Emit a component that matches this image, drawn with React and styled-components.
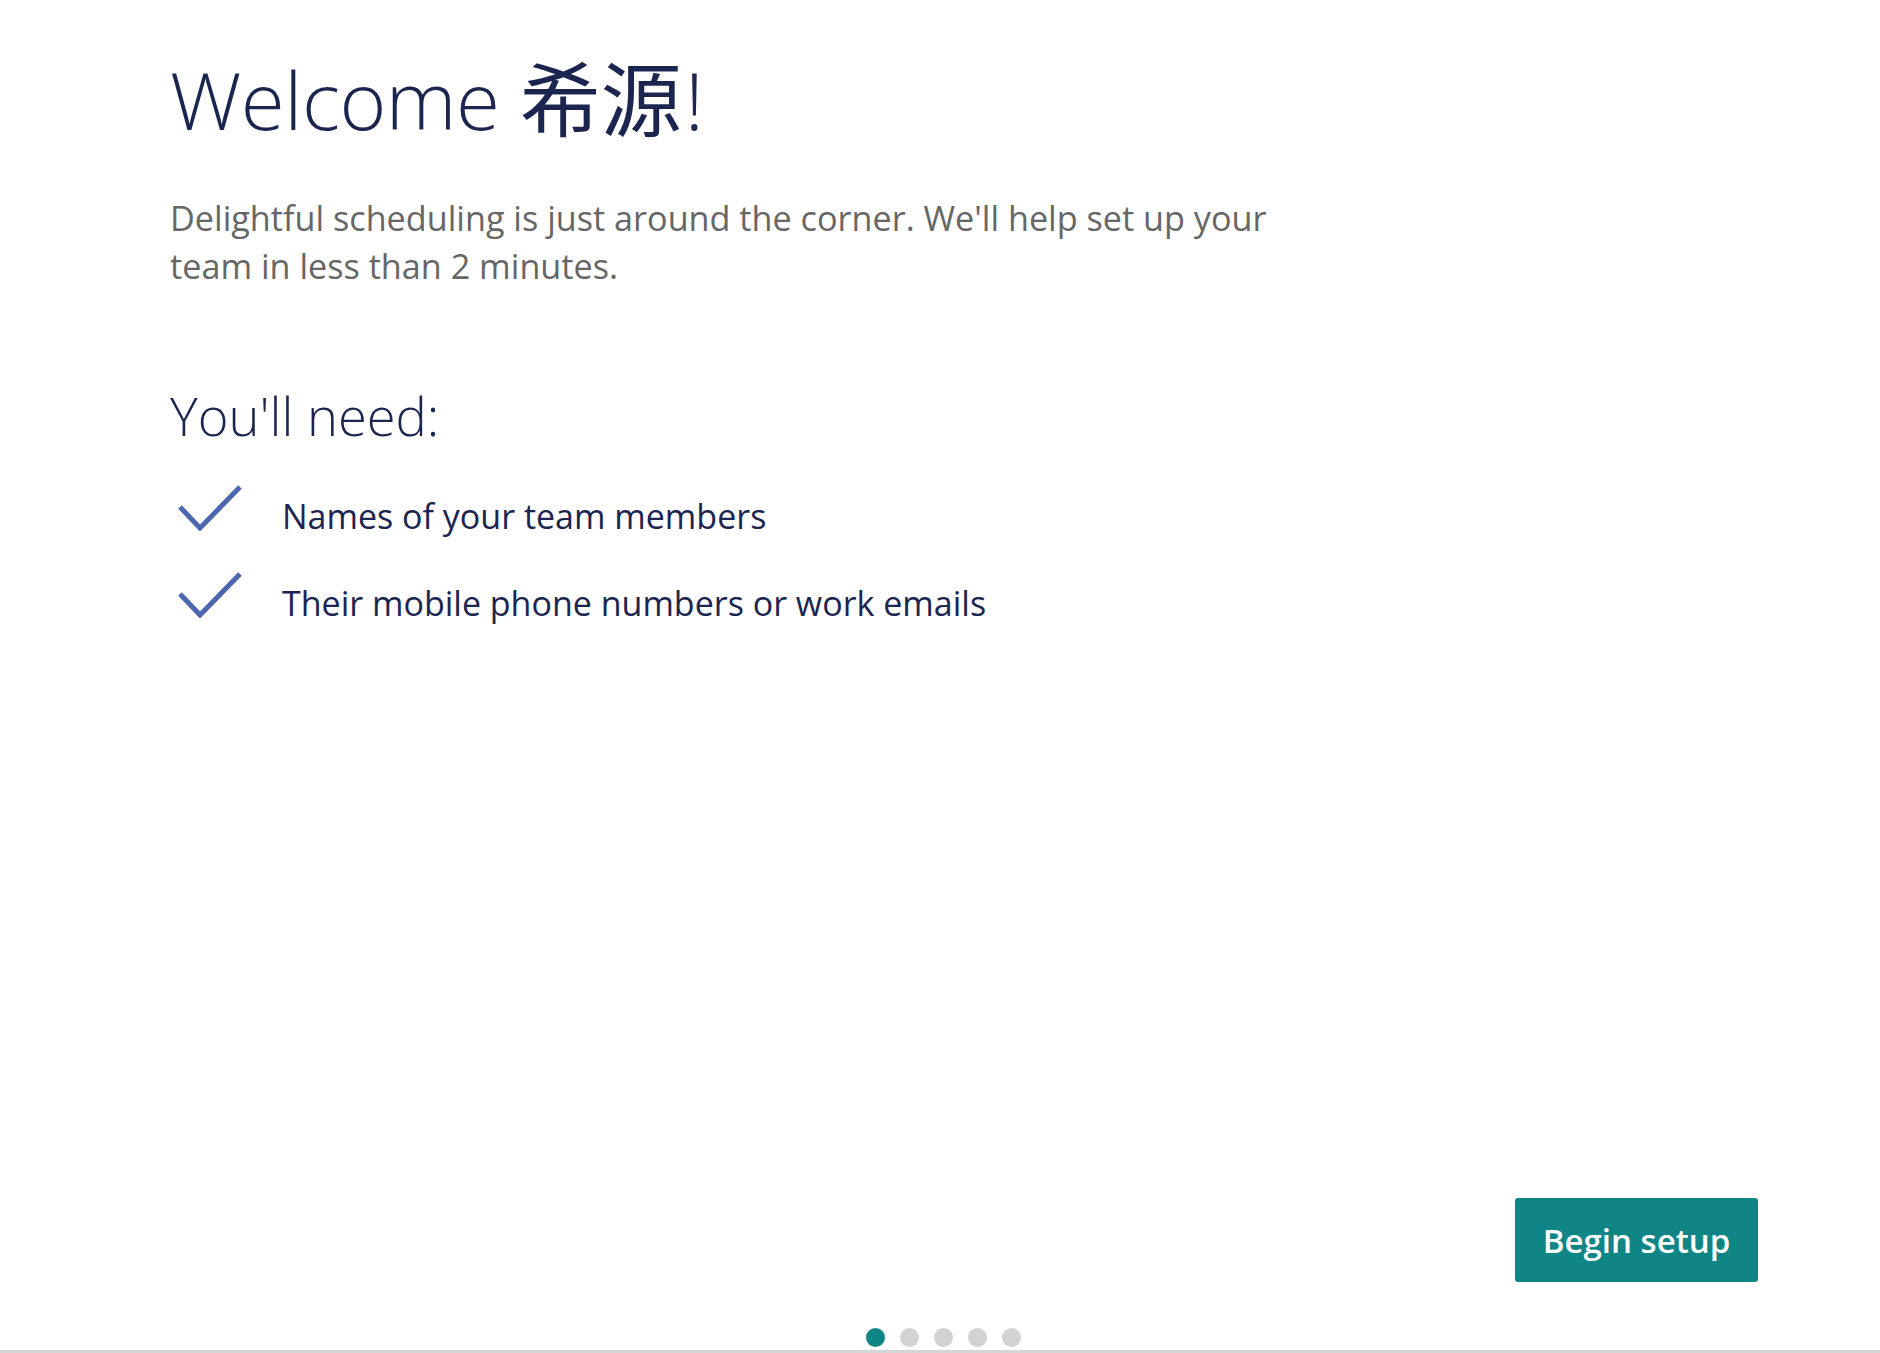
import React from "react";
import styled, { createGlobalStyle } from "styled-components";

const Global = createGlobalStyle`
  html, body { margin: 0; padding: 0; background: #ffffff; }
  body { font-family: "Open Sans", "Noto Sans", sans-serif; }
  * { box-sizing: border-box; }
`;

const Page = styled.div`
  height: 1353px;
  display: flex;
  flex-direction: column;
  border-bottom: 3px solid #d5d5d5;
`;

const Content = styled.main`
  flex: 1;
  padding: 0 0 0 170px;
`;

const Title = styled.h1`
  margin: 45px 0 0;
  font-size: 80px;
  font-weight: 300;
  line-height: 100px;
  color: #1b2550;
  letter-spacing: -0.5px;
`;

const Cjk = styled.span`
  font-family: "Noto Sans CJK SC", sans-serif;
  font-weight: 400;
  font-size: 81px;
  letter-spacing: 0;
  margin-right: 3px;
`;

const Lead = styled.p`
  margin: 45px 0 0;
  max-width: 1150px;
  font-size: 34.2px;
  line-height: 48px;
  color: #666666;
`;

const SubTitle = styled.h2`
  margin: 91px 0 0;
  font-size: 52.5px;
  font-weight: 300;
  line-height: 70px;
  color: #1b2550;
`;

const List = styled.ul`
  list-style: none;
  margin: 40px 0 0;
  padding: 0;
  display: flex;
  flex-direction: column;
  gap: 37px;
`;

const Item = styled.li`
  display: flex;
  align-items: center;
  gap: 40px;
  padding-left: 8px;
  font-size: 34px;
  line-height: 50px;
  color: #1b2550;
`;

const CheckIcon = styled.svg`
  flex: none;
  margin-top: -16px;
`;

const Footer = styled.footer`
  display: flex;
  flex-direction: column;
`;

const Actions = styled.div`
  display: flex;
  justify-content: flex-end;
  padding-right: 122px;
`;

const Button = styled.button`
  width: 243px;
  height: 84px;
  border: none;
  border-radius: 3px;
  background: #108585;
  color: #ffffff;
  font-family: "Open Sans", sans-serif;
  font-size: 33px;
  font-weight: 600;
  cursor: pointer;
`;

const Dots = styled.div`
  display: flex;
  justify-content: center;
  gap: 15px;
  margin: 46px 0 0 6px;
  padding-bottom: 3px;
`;

const Dot = styled.span`
  width: 19px;
  height: 19px;
  border-radius: 50%;
  background: ${(p) => (p.$active ? "#108585" : "#d2d2d2")};
`;

const Check = () => (
  <CheckIcon width="64" height="46" viewBox="0 0 64 46" fill="none">
    <polyline
      points="2,22 22,43 62,2"
      stroke="#4d66b0"
      strokeWidth="5"
      strokeLinecap="butt"
      strokeLinejoin="miter"
    />
  </CheckIcon>
);

export default function App() {
  return (
    <>
      <Global />
      <Page>
        <Content>
          <Title>
            Welcome <Cjk>希源</Cjk>!
          </Title>
          <Lead>
            Delightful scheduling is just around the corner. We'll help set up
            your team in less than 2 minutes.
          </Lead>
          <SubTitle>You'll need:</SubTitle>
          <List>
            <Item>
              <Check />
              Names of your team members
            </Item>
            <Item>
              <Check />
              Their mobile phone numbers or work emails
            </Item>
          </List>
        </Content>
        <Footer>
          <Actions>
            <Button>Begin setup</Button>
          </Actions>
          <Dots>
            {[0, 1, 2, 3, 4].map((i) => (
              <Dot key={i} $active={i === 0} />
            ))}
          </Dots>
        </Footer>
      </Page>
    </>
  );
}
